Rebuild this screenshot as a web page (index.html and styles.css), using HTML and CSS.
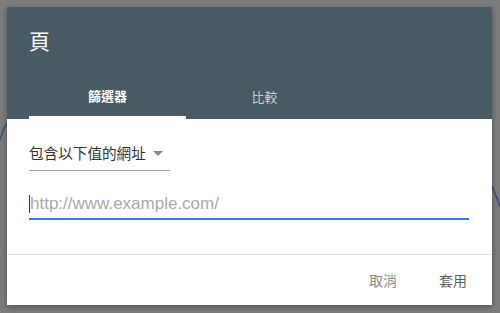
FILE: index.html
```html
<!DOCTYPE html>
<html lang="zh-Hant">
<head>
<meta charset="utf-8">
<link rel="stylesheet" href="styles.css">
</head>
<body>
<div class="backdrop">
  <svg class="chart" width="500" height="313" viewBox="0 0 500 313">
    <polyline points="0,140 4,128 8,122" fill="none" stroke="#3a4a8a" stroke-width="1.5"/>
    <polyline points="492,186 496,196 500,206" fill="none" stroke="#3a4a8a" stroke-width="1.5"/>
  </svg>
  <div class="dialog">
    <div class="header">
      <div class="title">頁</div>
      <div class="tabs">
        <div class="tab active">篩選器</div>
        <div class="tab">比較</div>
      </div>
    </div>
    <div class="content">
      <div class="select">
        <span class="select-label">包含以下值的網址</span>
        <span class="arrow"></span>
      </div>
      <div class="input">
        <span class="caret"></span>
        <span class="placeholder">http://www.example.com/</span>
      </div>
    </div>
    <div class="footer">
      <span class="btn cancel">取消</span>
      <span class="btn apply">套用</span>
    </div>
  </div>
</div>
</body>
</html>
```
FILE: styles.css
```css
html, body {
  margin: 0;
  padding: 0;
}
body {
  width: 500px;
  height: 313px;
  overflow: hidden;
  background: #7c7c7c;
  font-family: "Liberation Sans", "Noto Sans CJK TC", sans-serif;
}
.backdrop {
  position: relative;
  width: 500px;
  height: 313px;
  padding-top: 7px;
  box-sizing: border-box;
}
.chart {
  position: absolute;
  left: 0;
  top: 0;
}
.dialog {
  position: relative;
  margin-left: 7px;
  width: 485px;
  height: 298px;
  background: #fff;
  display: flex;
  flex-direction: column;
  box-shadow: 0 2px 6px rgba(0,0,0,0.35);
}
.header {
  background: #485a64;
  height: 112px;
  display: flex;
  flex-direction: column;
  justify-content: space-between;
  padding-left: 22px;
}
.title {
  color: #fff;
  font-size: 21px;
  line-height: 30px;
  margin-top: 18px;
  font-family: "Noto Sans CJK TC", sans-serif;
}
.tabs {
  display: flex;
}
.tab {
  width: 157px;
  height: 44px;
  box-sizing: border-box;
  display: flex;
  align-items: center;
  justify-content: center;
  font-size: 13px;
  color: #c9d0d4;
  font-family: "Noto Sans CJK TC", sans-serif;
  padding-bottom: 2px;
}
.tab.active {
  color: #fff;
  font-weight: bold;
  border-bottom: 3px solid #fff;
  padding-bottom: 0;
}
.content {
  flex: 1;
  padding: 22px 22px 0 22px;
  border-bottom: 1px solid #e2e2e2;
}
.select {
  width: 141px;
  height: 30px;
  padding-bottom: 6px;
  border-bottom: 1px solid #9e9e9e;
  display: flex;
  align-items: center;
  box-sizing: border-box;
}
.select-label {
  font-size: 14.6px;
  color: #333;
  font-family: "Noto Sans CJK TC", sans-serif;
}
.arrow {
  width: 0;
  height: 0;
  border-left: 5px solid transparent;
  border-right: 5px solid transparent;
  border-top: 5px solid #8a8a8a;
  margin-left: 7px;
  margin-top: 1px;
}
.input {
  margin-top: 18px;
  width: 440px;
  height: 31px;
  border-bottom: 2px solid #3d7ae0;
  display: flex;
  align-items: center;
  box-sizing: border-box;
}
.caret {
  width: 1px;
  height: 18px;
  background: #333;
}
.placeholder {
  font-size: 17px;
  color: #a9a9a9;
}
.footer {
  height: 50px;
  display: flex;
  justify-content: flex-end;
  align-items: center;
  padding-right: 25px;
  gap: 42px;
}
.btn {
  font-size: 14px;
  font-family: "Noto Sans CJK TC", sans-serif;
}
.cancel {
  color: #8a8a8a;
}
.apply {
  color: #5f5f5f;
}
```
